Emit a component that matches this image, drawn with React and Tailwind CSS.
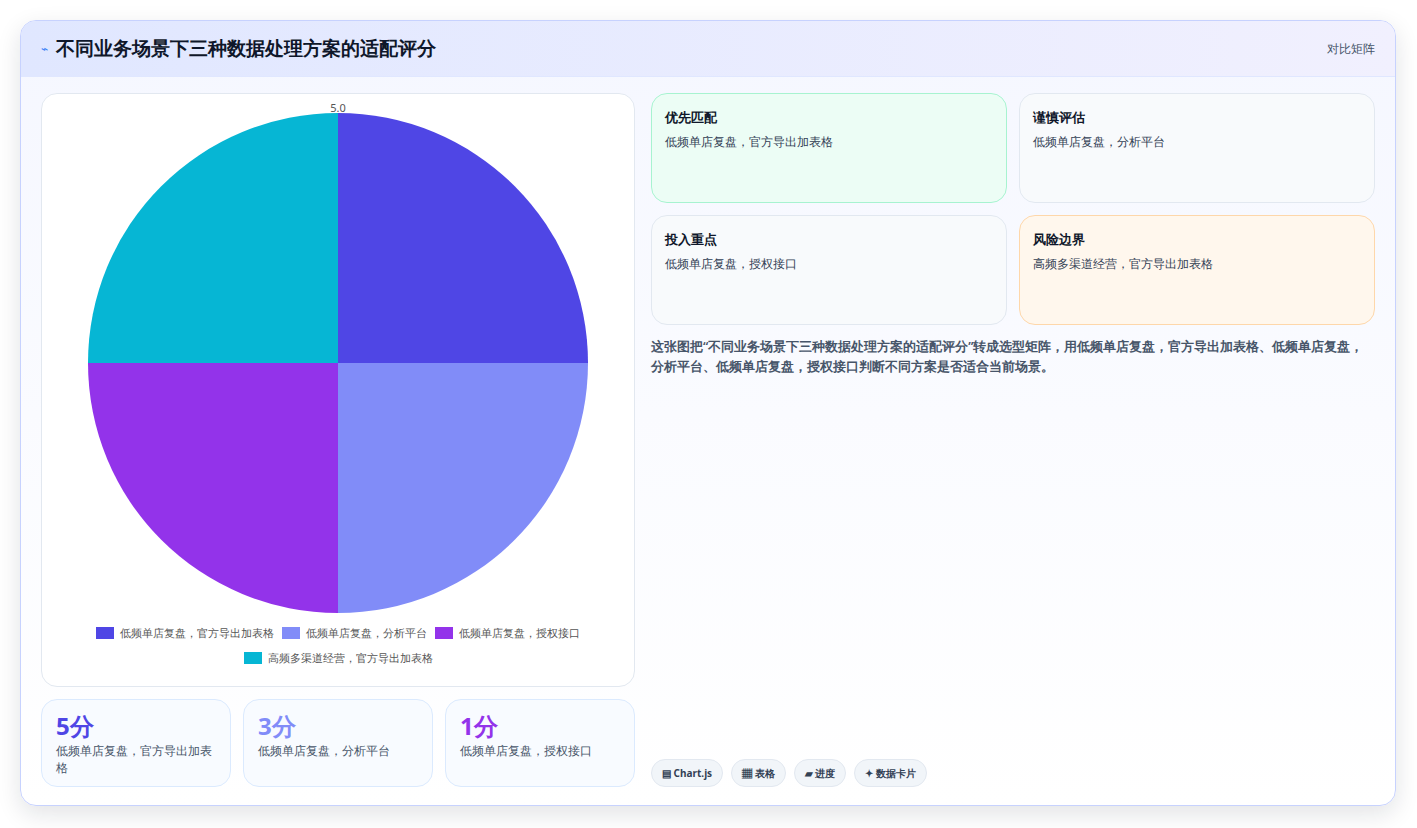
import React from "react";

const legend = [
  { c: "bg-[#4f46e5]", t: "低频单店复盘，官方导出加表格" },
  { c: "bg-[#818cf8]", t: "低频单店复盘，分析平台" },
  { c: "bg-[#9333ea]", t: "低频单店复盘，授权接口" },
  { c: "bg-[#06b6d4]", t: "高频多渠道经营，官方导出加表格" },
];

const stats = [
  { v: "5分", c: "text-[#4f46e5]", t: "低频单店复盘，官方导出加表格" },
  { v: "3分", c: "text-[#818cf8]", t: "低频单店复盘，分析平台" },
  { v: "1分", c: "text-[#9333ea]", t: "低频单店复盘，授权接口" },
];

const cards = [
  { h: "优先匹配", t: "低频单店复盘，官方导出加表格", cls: "bg-[#ecfdf5] border-[#a7f3d0]" },
  { h: "谨慎评估", t: "低频单店复盘，分析平台", cls: "bg-[#f8fafc] border-[#e2e8f0]" },
  { h: "投入重点", t: "低频单店复盘，授权接口", cls: "bg-[#f8fafc] border-[#e2e8f0]" },
  { h: "风险边界", t: "高频多渠道经营，官方导出加表格", cls: "bg-[#fff7ed] border-[#fed7aa]" },
];

function Pie() {
  const r = 250;
  return (
    <svg width="520" height="520" viewBox="-260 -262 520 520">
      <path d={`M0 0 L0 ${-r} A${r} ${r} 0 0 1 ${r} 0 Z`} fill="#4f46e5" />
      <path d={`M0 0 L${r} 0 A${r} ${r} 0 0 1 0 ${r} Z`} fill="#818cf8" />
      <path d={`M0 0 L0 ${r} A${r} ${r} 0 0 1 ${-r} 0 Z`} fill="#9333ea" />
      <path d={`M0 0 L${-r} 0 A${r} ${r} 0 0 1 0 ${-r} Z`} fill="#06b6d4" />
      <text x="0" y="-251" textAnchor="middle" fontSize="11" fill="#555">5.0</text>
    </svg>
  );
}

export default function App() {
  return (
    <div className="w-[1417px] h-[828px] bg-white p-5 font-['Noto_Sans_CJK_SC','Noto_Sans',sans-serif]">
      <div className="h-[786px] w-[1376px] rounded-2xl border border-[#c7d2fe] bg-gradient-to-b from-[#f5f7ff] to-white shadow-[0_8px_24px_rgba(15,23,42,0.12)] overflow-hidden flex flex-col">
        <div className="h-[56px] shrink-0 flex items-center justify-between px-5 bg-gradient-to-r from-[#e0e7ff] to-[#f1f0fe] border-b border-[#e0e7ff]">
          <div className="flex items-center gap-2">
            <span className="text-[#3b82f6] text-xs">⌁</span>
            <h1 className="text-[19px] font-bold text-[#0f172a]">不同业务场景下三种数据处理方案的适配评分</h1>
          </div>
          <span className="text-xs font-medium text-[#475569]">对比矩阵</span>
        </div>
        <div className="flex-1 flex gap-4 px-5 pt-4 pb-[18px]">
          <div className="w-[594px] flex flex-col gap-3">
            <div className="h-[594px] rounded-2xl border border-[#e2e8f0] bg-white flex flex-col items-center pt-[7px]">
              <Pie />
              <div className="mt-[4px] flex flex-wrap justify-center gap-x-2 gap-y-2 px-6 w-[580px]">
                {legend.map((l) => (
                  <div key={l.t} className="flex items-center gap-1.5 text-[11px] font-medium text-[#555]">
                    <span className={`w-[18px] h-[12px] ${l.c}`} />
                    {l.t}
                  </div>
                ))}
              </div>
            </div>
            <div className="grid grid-cols-3 gap-3 h-[88px]">
              {stats.map((s) => (
                <div key={s.v} className="rounded-2xl border border-[#dbeafe] bg-[#f8fbff] pl-[14px] pr-[14px] pt-[10px]">
                  <div className={`text-[24px] font-bold leading-8 ${s.c}`}>{s.v}</div>
                  <div className="text-[12px] font-medium text-[#475569] leading-[17px]">{s.t}</div>
                </div>
              ))}
            </div>
          </div>
          <div className="flex-1 flex flex-col">
            <div className="grid grid-cols-2 gap-3">
              {cards.map((c) => (
                <div key={c.h} className={`h-[110px] rounded-2xl border px-[13px] pt-[14px] ${c.cls}`}>
                  <div className="text-[13px] font-bold text-[#0f172a]">{c.h}</div>
                  <div className="mt-[5px] text-[12px] font-medium text-[#334155]">{c.t}</div>
                </div>
              ))}
            </div>
            <p className="mt-[12px] text-[12.5px] leading-[20px] text-[#475569] font-semibold">
              这张图把“不同业务场景下三种数据处理方案的适配评分”转成选型矩阵，用低频单店复盘，官方导出加表格、低频单店复盘，分析平台、低频单店复盘，授权接口判断不同方案是否适合当前场景。
            </p>
            <div className="mt-auto flex gap-2">
              {["▤ Chart.js", "▦ 表格", "▰ 进度", "✦ 数据卡片"].map((t) => (
                <span key={t} className="h-[28px] flex items-center px-[10px] rounded-full border border-[#e2e8f0] bg-[#f1f5f9] text-[10px] font-bold text-[#334155]">{t}</span>
              ))}
            </div>
          </div>
        </div>
      </div>
    </div>
  );
}
